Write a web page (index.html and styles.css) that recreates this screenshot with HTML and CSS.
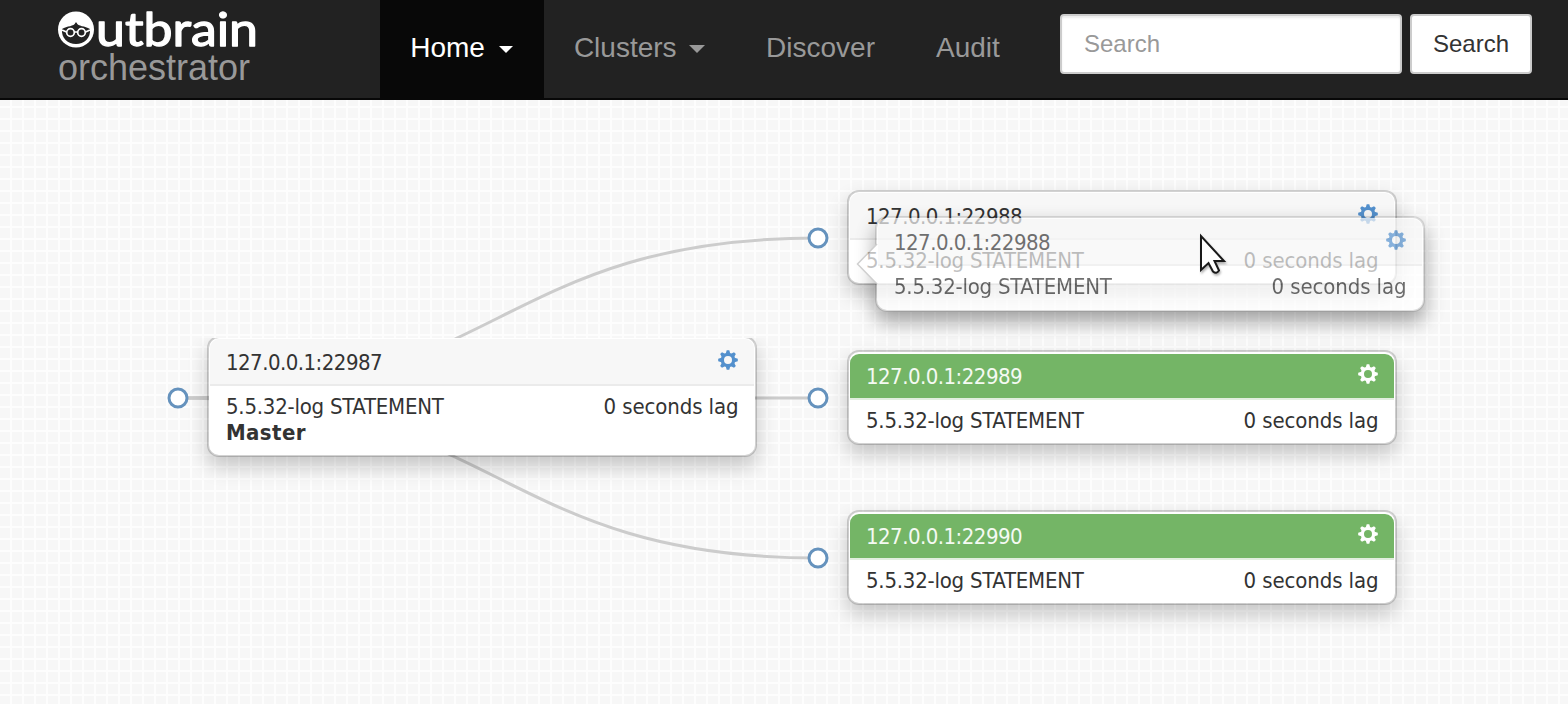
FILE: index.html
```html
<!DOCTYPE html>
<html lang="en">
<head>
<meta charset="utf-8">
<title>Orchestrator</title>
<link rel="stylesheet" href="styles.css">
</head>
<body>
<svg class="defs" aria-hidden="true">
  <symbol id="cog" viewBox="-10 -10 20 20">
    <g fill="currentColor">
      <path fill-rule="evenodd" d="M0-7.3A7.3 7.3 0 1 1 0 7.3A7.3 7.3 0 1 1 0-7.3ZM0-4A4 4 0 1 0 0 4A4 4 0 1 0 0-4Z"/>
      <g id="teeth"><path d="M-2.2-6.5L-1.3-9.8H1.3L2.2-6.5ZM-2.2 6.5L-1.3 9.8H1.3L2.2 6.5ZM-6.5-2.2L-9.8-1.3V1.3L-6.5 2.2ZM6.5-2.2L9.8-1.3V1.3L6.5 2.2Z"/></g>
      <use href="#teeth" transform="rotate(45)"/>
    </g>
  </symbol>
</svg>
<header class="navbar">
  <div class="brand">
    <svg class="logo" width="204" height="50" viewBox="0 0 204 50">
      <circle cx="19" cy="29.500" r="18" fill="#fff"/>
      <path d="M5 29C10 25.500 17 27 18.500 22.500L19.500 22.500C21 27 28 25.500 33 29C34 38 27 44 19 44S4 38 5 29Z" fill="#222"/>
      <g fill="none" stroke="#fff" stroke-width="1.700"><circle cx="13.500" cy="32.500" r="3.800"/><circle cx="24.500" cy="32.500" r="3.800"/><path d="M5 30L9.500 32M28.500 32L33 30M17.500 32H20.500"/></g>
      <text class="logo-text" x="39" y="45.500" textLength="162" lengthAdjust="spacingAndGlyphs">utbrain</text>
    </svg>
    <span class="brand-name">orchestrator</span>
  </div>
  <nav class="menu">
    <a class="item active">Home<i class="caret"></i></a>
    <a class="item">Clusters<i class="caret wide"></i></a>
    <a class="item">Discover</a>
    <a class="item">Audit</a>
  </nav>
  <form class="search">
    <input class="field" type="text" placeholder="Search">
    <button class="button" type="button">Search</button>
  </form>
</header>
<main class="canvas">
  <svg class="links" width="1568" height="604" viewBox="0 100 1568 604">
    <g fill="none" stroke="#ccc" stroke-width="3">
      <path d="M178 398C498 398 498 238 818 238"/><path d="M178 398H818"/><path d="M178 398C498 398 498 558 818 558"/>
    </g>
    <g fill="#fff" stroke="#6592bd" stroke-width="3">
      <circle cx="178" cy="398" r="9"/><circle cx="818" cy="238" r="9"/><circle cx="818" cy="398" r="9"/><circle cx="818" cy="558" r="9"/>
    </g>
  </svg>
  <article class="node master">
    <h3 class="title"><span>127.0.0.1:22987</span><svg class="cog"><use href="#cog"/></svg></h3>
    <div class="body"><span class="version">5.5.32-log STATEMENT</span><span class="lag">0 seconds lag</span></div>
    <strong class="role">Master</strong>
  </article>
  <article class="node first">
    <h3 class="title"><span>127.0.0.1:22988</span><svg class="cog"><use href="#cog"/></svg></h3>
    <div class="body"><span class="version">5.5.32-log STATEMENT</span><span class="lag">0 seconds lag</span></div>
  </article>
  <article class="node second target">
    <h3 class="title"><span>127.0.0.1:22989</span><svg class="cog"><use href="#cog"/></svg></h3>
    <div class="body"><span class="version">5.5.32-log STATEMENT</span><span class="lag">0 seconds lag</span></div>
  </article>
  <article class="node third target">
    <h3 class="title"><span>127.0.0.1:22990</span><svg class="cog"><use href="#cog"/></svg></h3>
    <div class="body"><span class="version">5.5.32-log STATEMENT</span><span class="lag">0 seconds lag</span></div>
  </article>
  <article class="node dragged">
    <svg class="arrow" width="22" height="44" viewBox="0 0 22 44"><path d="M21 2L1.500 22L21 42" fill="#fff" stroke="#bbb" stroke-width="1.500"/></svg>
    <h3 class="title"><span>127.0.0.1:22988</span><svg class="cog"><use href="#cog"/></svg></h3>
    <div class="body"><span class="version">5.5.32-log STATEMENT</span><span class="lag">0 seconds lag</span></div>
  </article>
  <svg class="pointer" width="30" height="44" viewBox="0 0 30 44">
    <path d="M3 3V37L10.500 30L15 38.500Q18.500 41.500 21 37.500L16.500 28H26Z" fill="#fff" stroke="#1a1a1a" stroke-width="2"/>
  </svg>
</main>
</body>
</html>
```
FILE: styles.css
```css
* { box-sizing: border-box; }
body {
  margin: 0;
  height: 704px;
  overflow: hidden;
  font-family: "Liberation Sans", Arial, sans-serif;
}
.defs { position: absolute; width: 0; height: 0; }

.navbar {
  display: flex;
  height: 100px;
  background: #222;
  border-bottom: 2px solid #080808;
}
.brand {
  display: flex;
  flex-direction: column;
  width: 380px;
  padding-left: 57px;
}
.logo { display: block; flex: none; overflow: visible; }
.logo-text {
  font: 400 47px Lato, sans-serif;
  fill: #fff;
  stroke: #fff;
  stroke-width: 1.3px;
  stroke-linejoin: round;
}
.brand-name {
  margin-left: 1px;
  font-size: 36px;
  line-height: 36px;
  color: #999;
}
.menu { display: flex; width: 680px; }
.item {
  display: flex;
  align-items: center;
  padding: 0 30.8px 2px 30.2px;
  font-size: 28px;
  color: #999;
}
.active { background: #080808; color: #fff; }
.caret {
  margin: 2px 0 0 14px;
  border: 7px solid transparent;
  border-top-color: currentColor;
  border-bottom: 0;
}
.caret.wide { margin-left: 12.5px; border-width: 8px 8px 0; }
.search { display: flex; gap: 8px; padding-top: 14px; }
.field, .button {
  height: 60px;
  border: 2px solid #ccc;
  border-radius: 4px;
  background: #fff;
  font: 24px "Liberation Sans", Arial, sans-serif;
  color: #333;
}
.field {
  width: 342px;
  padding: 0 22px;
  box-shadow: inset 0 2px 2px rgba(0, 0, 0, .075);
}
.field::placeholder { color: #999; opacity: 1; }
.button { width: 122px; padding: 0; }

.canvas {
  position: relative;
  height: 604px;
  background-color: #f7f7f7;
  background-image:
    linear-gradient(90deg, transparent 10px, #fdfdfd 10px),
    linear-gradient(transparent 10px, #fdfdfd 10px);
  background-size: 12px 12px;
  background-position: 0 -4px;
  font-family: "DejaVu Sans Condensed", "DejaVu Sans", sans-serif;
  font-stretch: condensed;
}
.links { display: block; }
.node {
  position: absolute;
  width: 550px;
  height: 95px;
  padding: 1px;
  border: 2px solid rgba(0, 0, 0, .17);
  border-radius: 12px;
  background: #fff;
  background-clip: padding-box;
  box-shadow: 0 10px 20px rgba(0, 0, 0, .2);
  font-size: 22px;
  color: #333;
}
.master { left: 207px; top: 236px; height: 121px; clip-path: inset(2px -40px -40px -40px); }
.first { left: 847px; top: 90px; }
.second { left: 847px; top: 250px; }
.third { left: 847px; top: 410px; }
.dragged { left: 875px; top: 116px; height: 96px; opacity: .7; box-shadow: 0 10px 20px rgba(0, 0, 0, .5); }
.title {
  display: flex;
  align-items: center;
  justify-content: space-between;
  height: 47px;
  margin: 0;
  padding: 1px 16px 0 16px;
  border-bottom: 2px solid #ebebeb;
  border-radius: 9px 9px 0 0;
  background: #f7f7f7;
  font: inherit;
  letter-spacing: -.53px;
}
.target .title { margin-top: 1px; height: 46px; padding-top: 0; background: #74b566; border-bottom-color: #e2eedf; color: #f5faf3; }
.cog { width: 20px; height: 20px; margin-bottom: 4px; color: #5390cd; }
.target .cog { color: #fff; }
.body {
  display: flex;
  justify-content: space-between;
  padding: 8px 15.5px 0 16px;
  line-height: 26px;
}
.version { letter-spacing: -.24px; }
.lag { letter-spacing: -.1px; }
.role { display: block; padding-left: 16px; line-height: 26px; letter-spacing: .4px; }
.arrow { position: absolute; left: -21px; top: 24px; }
.pointer { position: absolute; left: 1198px; top: 133px; filter: drop-shadow(1px 2px 1px rgba(0, 0, 0, .3)); }
```
